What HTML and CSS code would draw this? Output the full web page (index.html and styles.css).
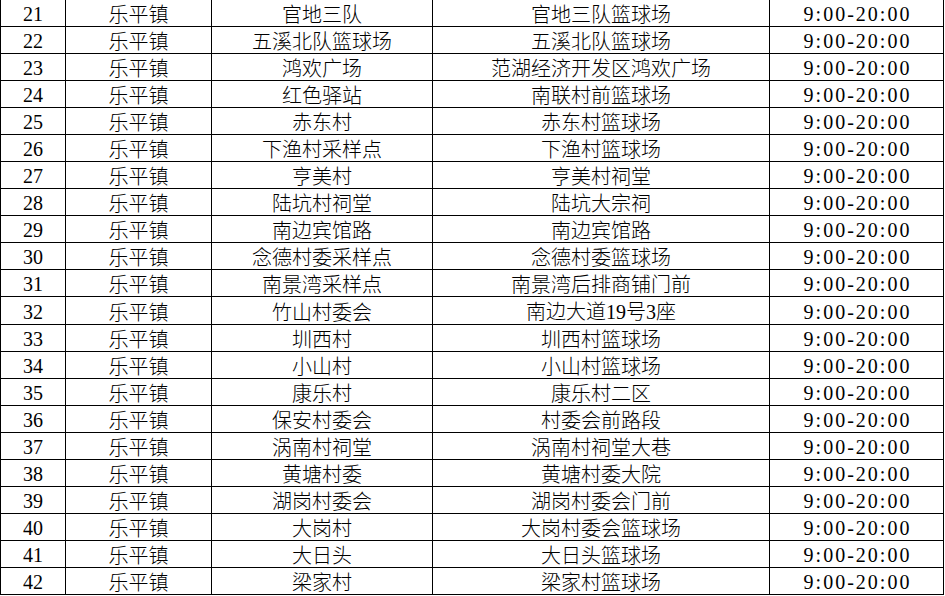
FILE: index.html
```html
<!DOCTYPE html>
<html lang="zh-CN">
<head>
<meta charset="utf-8">
<title>核酸采样点</title>
<link rel="stylesheet" href="styles.css">
</head>
<body>
<table class="sites">
<colgroup>
<col class="c-no"><col class="c-town"><col class="c-name"><col class="c-addr"><col class="c-time">
</colgroup>
<tbody>
<tr><td class="no">21</td><td>乐平镇</td><td>官地三队</td><td>官地三队篮球场</td><td class="time">9:00-20:00</td></tr>
<tr><td class="no">22</td><td>乐平镇</td><td>五溪北队篮球场</td><td>五溪北队篮球场</td><td class="time">9:00-20:00</td></tr>
<tr><td class="no">23</td><td>乐平镇</td><td>鸿欢广场</td><td>范湖经济开发区鸿欢广场</td><td class="time">9:00-20:00</td></tr>
<tr><td class="no">24</td><td>乐平镇</td><td>红色驿站</td><td>南联村前篮球场</td><td class="time">9:00-20:00</td></tr>
<tr><td class="no">25</td><td>乐平镇</td><td>赤东村</td><td>赤东村篮球场</td><td class="time">9:00-20:00</td></tr>
<tr><td class="no">26</td><td>乐平镇</td><td>下渔村采样点</td><td>下渔村篮球场</td><td class="time">9:00-20:00</td></tr>
<tr><td class="no">27</td><td>乐平镇</td><td>亨美村</td><td>亨美村祠堂</td><td class="time">9:00-20:00</td></tr>
<tr><td class="no">28</td><td>乐平镇</td><td>陆坑村祠堂</td><td>陆坑大宗祠</td><td class="time">9:00-20:00</td></tr>
<tr><td class="no">29</td><td>乐平镇</td><td>南边宾馆路</td><td>南边宾馆路</td><td class="time">9:00-20:00</td></tr>
<tr><td class="no">30</td><td>乐平镇</td><td>念德村委采样点</td><td>念德村委篮球场</td><td class="time">9:00-20:00</td></tr>
<tr><td class="no">31</td><td>乐平镇</td><td>南景湾采样点</td><td>南景湾后排商铺门前</td><td class="time">9:00-20:00</td></tr>
<tr><td class="no">32</td><td>乐平镇</td><td>竹山村委会</td><td>南边大道<span class="num">19</span>号<span class="num">3</span>座</td><td class="time">9:00-20:00</td></tr>
<tr><td class="no">33</td><td>乐平镇</td><td>圳西村</td><td>圳西村篮球场</td><td class="time">9:00-20:00</td></tr>
<tr><td class="no">34</td><td>乐平镇</td><td>小山村</td><td>小山村篮球场</td><td class="time">9:00-20:00</td></tr>
<tr><td class="no">35</td><td>乐平镇</td><td>康乐村</td><td>康乐村二区</td><td class="time">9:00-20:00</td></tr>
<tr><td class="no">36</td><td>乐平镇</td><td>保安村委会</td><td>村委会前路段</td><td class="time">9:00-20:00</td></tr>
<tr><td class="no">37</td><td>乐平镇</td><td>涡南村祠堂</td><td>涡南村祠堂大巷</td><td class="time">9:00-20:00</td></tr>
<tr><td class="no">38</td><td>乐平镇</td><td>黄塘村委</td><td>黄塘村委大院</td><td class="time">9:00-20:00</td></tr>
<tr><td class="no">39</td><td>乐平镇</td><td>湖岗村委会</td><td>湖岗村委会门前</td><td class="time">9:00-20:00</td></tr>
<tr><td class="no">40</td><td>乐平镇</td><td>大岗村</td><td>大岗村委会篮球场</td><td class="time">9:00-20:00</td></tr>
<tr><td class="no">41</td><td>乐平镇</td><td>大日头</td><td>大日头篮球场</td><td class="time">9:00-20:00</td></tr>
<tr><td class="no">42</td><td>乐平镇</td><td>梁家村</td><td>梁家村篮球场</td><td class="time">9:00-20:00</td></tr>
</tbody>
</table>
</body>
</html>
```

FILE: styles.css
```css
html, body {
  margin: 0;
  padding: 0;
  background: #ffffff;
}

.sites {
  border-collapse: collapse;
  table-layout: fixed;
  width: 943px;
  margin-top: -1px;
  font-family: "Noto Sans CJK SC", "Liberation Serif", serif;
  font-size: 20px;
  font-weight: 300;
  color: #000000;
}

.c-no { width: 65px; }
.c-town { width: 146px; }
.c-name { width: 221px; }
.c-addr { width: 337px; }
.c-time { width: 174px; }

.sites td {
  border: 1px solid #000000;
  height: 26px;
  padding: 2px 0 0 0;
  box-sizing: border-box;
  text-align: center;
  vertical-align: middle;
  line-height: 24px;
  white-space: nowrap;
}

.sites td.no,
.sites .num {
  font-family: "Liberation Serif", serif;
  font-weight: 400;
}

.sites td.time {
  font-family: "Liberation Serif", serif;
  font-weight: 400;
  letter-spacing: 2px;
  text-indent: 2px;
}
```
